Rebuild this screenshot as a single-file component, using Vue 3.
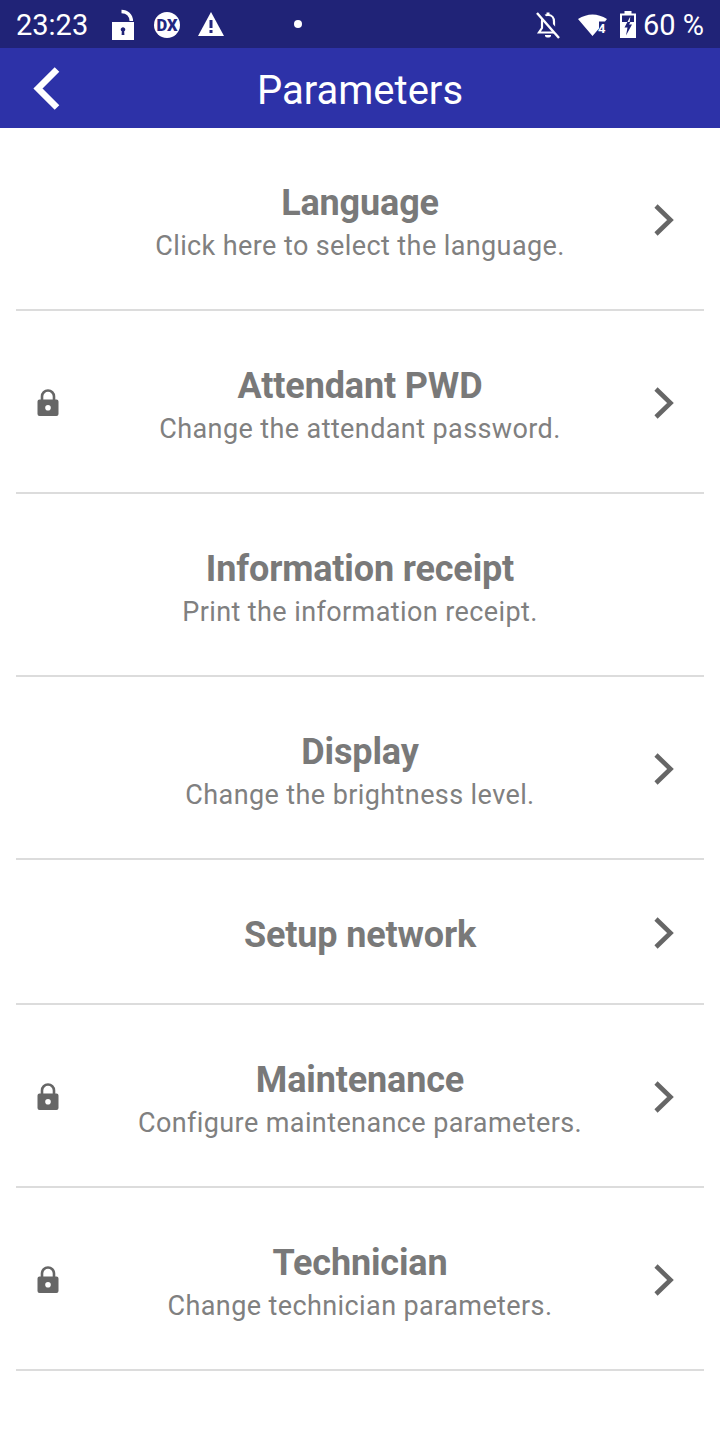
<script setup>
const rows = [
  { title: 'Language', sub: 'Click here to select the language.', arrow: true },
  { title: 'Attendant PWD', sub: 'Change the attendant password.', lock: true, arrow: true },
  { title: 'Information receipt', sub: 'Print the information receipt.' },
  { title: 'Display', sub: 'Change the brightness level.', arrow: true },
  { title: 'Setup network', arrow: true },
  { title: 'Maintenance', sub: 'Configure maintenance parameters.', lock: true, arrow: true },
  { title: 'Technician', sub: 'Change technician parameters.', lock: true, arrow: true }
]
</script>

<template>
  <div class="screen">
    <div class="statusbar">
      <span class="time">23:23</span>
      <svg class="ic-unlock" width="22" height="32" viewBox="0 0 22 32">
        <path d="M0 13h22v18H0z M9.400 19a2 2 0 0 0 .4 3.300l-.2 3.700h2.800l-.2-3.700a2 2 0 0 0 .4-3.300 2 2 0 0 0-3.200 0z" fill="#fff" fill-rule="evenodd" />
        <path d="M9.500 2.500c5.500 0 9.500 3.500 9.800 9.500" fill="none" stroke="#fff" stroke-width="3.600" />
      </svg>
      <svg class="ic-dx" width="26" height="26" viewBox="0 0 26 26">
        <circle cx="13" cy="13" r="13" fill="#fff" />
        <text x="13" y="18.800" text-anchor="middle" class="dx">DX</text>
      </svg>
      <svg class="ic-warn" width="26" height="24" viewBox="0 0 26 24">
        <path d="M13 0L26 24H0z" fill="#fff" />
        <path d="M11.500 8h3v8h-3zM11.500 18h3v3h-3z" fill="#232780" />
      </svg>
      <span class="dot"></span>
      <span class="spacer"></span>
      <svg class="ic-bell" width="26" height="28" viewBox="0 0 26 28">
        <path d="M13 4c-4 0-6 3-6 6.500v6.500L4 21.500h18l-3-4.500v-6.500C19 7 17 4 13 4z" fill="none" stroke="#fff" stroke-width="2.200" />
        <path d="M10 24h6v.500a2 2 0 0 1-2 2h-2a2 2 0 0 1-2-2z" fill="#fff" />
        <path d="M11.500 1.500h3v3h-3z" fill="#fff" />
        <path d="M4 1l21 24" stroke="#202377" stroke-width="5" />
        <path d="M2 2l22 25" stroke="#fff" stroke-width="2.400" />
      </svg>
      <svg class="ic-wifi" width="30" height="24" viewBox="0 0 30 24">
        <path d="M0 6Q14.500-3 29 6L27 8.500H21V15.500L14.500 23z" fill="#fff" />
        <text x="20" y="19.500" class="four">4</text>
      </svg>
      <svg class="ic-batt" width="16" height="27" viewBox="0 0 16 27">
        <path fill-rule="evenodd" fill="#fff" d="M4.500 0h7v2.500H16V27H0V2.500h4.500z M2 4.500V11h12V4.500z" />
        <path fill="#202377" d="M7.400 11h2.900l-1.200 2.500h2.900L6 24.500l1.500-8H4.500z" />
        <path fill="#fff" d="M10.300 5.500L9.600 11H7.500z" />
      </svg>
      <span class="pct">60 %</span>
    </div>

    <header class="topbar">
      <svg class="back" width="32" height="48" viewBox="0 0 32 48">
        <path d="M27 5.500L8 24.500l19 19" fill="none" stroke="#fff" stroke-width="6.500" />
      </svg>
      <h1>Parameters</h1>
    </header>

    <ul class="list">
      <li v-for="r in rows" :key="r.title" class="row" :class="{ short: !r.sub }">
        <svg v-if="r.lock" class="lock" width="24" height="30" viewBox="0 0 24 30">
          <path d="M6 13V8.500a6 6 0 0 1 12 0V13" fill="none" stroke="#666" stroke-width="2.600" />
          <path fill="#666" fill-rule="evenodd" d="M3.500 11.500h17a2 2 0 0 1 2 2V26a2 2 0 0 1-2 2h-17a2 2 0 0 1-2-2V13.500a2 2 0 0 1 2-2z M12 17a2.800 2.800 0 1 0 0 5.600 2.800 2.800 0 0 0 0-5.600z" />
        </svg>
        <div class="text">
          <div class="title">{{ r.title }}</div>
          <div v-if="r.sub" class="sub">{{ r.sub }}</div>
        </div>
        <svg v-if="r.arrow" class="chev" width="24" height="34" viewBox="0 0 24 34">
          <path d="M4 3l14.500 14L4 31" fill="none" stroke="#666" stroke-width="4.600" />
        </svg>
      </li>
    </ul>
  </div>
</template>

<style scoped>
.screen {
  width: 720px;
  height: 1440px;
  background: #fff;
  font-family: Roboto, sans-serif;
  overflow: hidden;
}
.statusbar {
  height: 48px;
  background: #202377;
  color: #fff;
  display: flex;
  align-items: center;
  padding: 0 16px;
  box-sizing: border-box;
}
.time {
  font-size: 29px;
  width: 94px;
  margin-top: 2px;
}
.ic-unlock { margin-left: 2px; margin-top: 2px; }
.ic-dx { margin-left: 20px; margin-top: 1px; }
.dx {
  font-family: Roboto, sans-serif;
  font-weight: 900;
  font-size: 16.500px;
  fill: #232780;
}
.ic-warn { margin-left: 18px; }
.dot {
  width: 8px;
  height: 8px;
  border-radius: 50%;
  background: #fff;
  margin-left: 70px;
}
.spacer { flex: 1; }
.ic-bell { margin-top: 1px; }
.ic-wifi { margin-left: 17px; margin-top: 1px; }
.four {
  font-family: Roboto, sans-serif;
  font-weight: 700;
  font-size: 13px;
  fill: #fff;
}
.ic-batt { margin-left: 12px; margin-top: 1px; }
.pct {
  font-size: 29px;
  margin-left: 7px;
  margin-top: 2px;
}
.topbar {
  height: 80px;
  background: #2d32a8;
  display: flex;
  align-items: center;
  justify-content: center;
  position: relative;
}
.back {
  position: absolute;
  left: 30px;
  top: 16px;
}
h1 {
  margin: 4px 0 0;
  color: #fff;
  font-size: 40px;
  font-weight: 400;
}
.list {
  list-style: none;
  margin: 0;
  padding: 0 16px;
}
.row {
  height: 183px;
  box-sizing: border-box;
  border-bottom: 2px solid #dcdcdc;
  position: relative;
  display: flex;
  align-items: center;
  justify-content: center;
}
.row.short { height: 145px; }
.text { text-align: center; margin-top: 10px; }
.row.short .text { margin-top: 6px; }
.title {
  font-size: 36px;
  font-weight: 700;
  color: #797979;
  line-height: 44px;
  letter-spacing: -0.15px;
}
.sub {
  font-size: 27px;
  color: #808080;
  line-height: 42px;
  letter-spacing: 0.4px;
}
.lock {
  position: absolute;
  left: 20px;
  top: 77px;
}
.chev {
  position: absolute;
  left: 636px;
  top: 75px;
}
.row.short .chev { top: 56px; }
</style>
